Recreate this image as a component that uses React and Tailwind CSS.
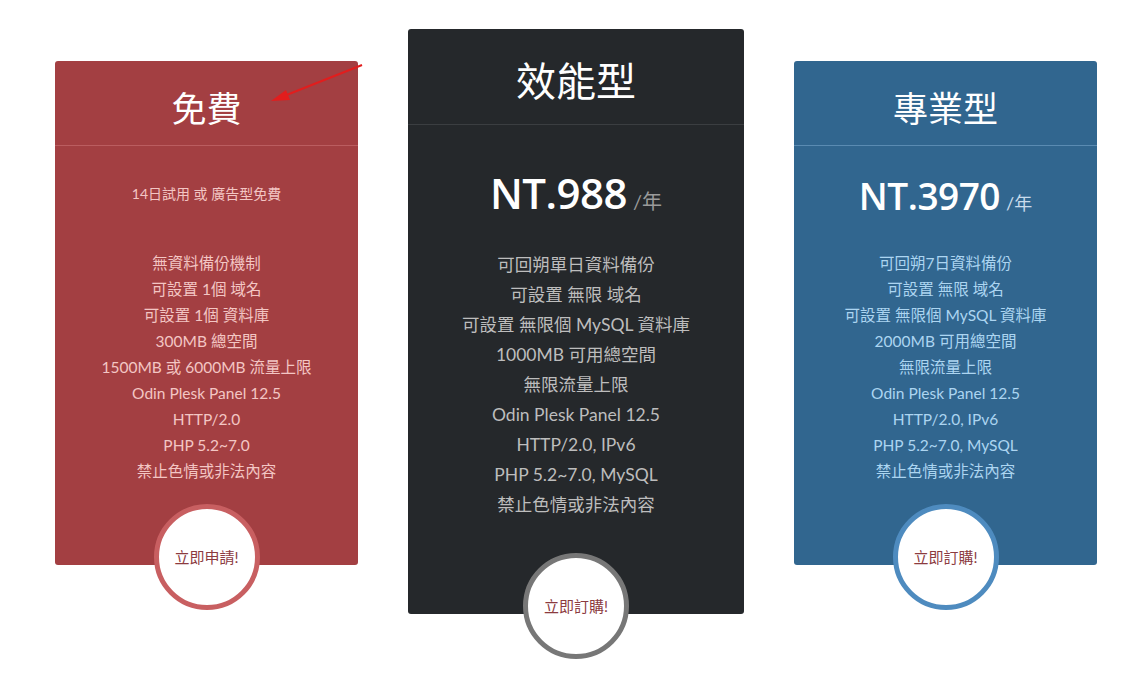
import React from 'react';

const plans = [
    {
        id: 'free',
        title: '免費',
        bg: 'bg-[#a33f42]',
        line: 'border-[#bb5d60]',
        text: 'text-[#f3c6c4]',
        ring: 'border-[#c85f61]',
        cta: '立即申請!',
        features: ['無資料備份機制', '可設置 1個 域名', '可設置 1個 資料庫', '300MB 總空間', '1500MB 或 6000MB 流量上限', 'Odin Plesk Panel 12.5', 'HTTP/2.0', 'PHP 5.2~7.0', '禁止色情或非法內容'],
    },
    {
        id: 'pro',
        title: '效能型',
        bg: 'bg-[#25282b]',
        line: 'border-[#3b3e41]',
        text: 'text-[#bdbdbd]',
        ring: 'border-[#777777]',
        cta: '立即訂購!',
        price: 'NT.988',
        features: ['可回朔單日資料備份', '可設置 無限 域名', '可設置 無限個 MySQL 資料庫', '1000MB 可用總空間', '無限流量上限', 'Odin Plesk Panel 12.5', 'HTTP/2.0, IPv6', 'PHP 5.2~7.0, MySQL', '禁止色情或非法內容'],
    },
    {
        id: 'biz',
        title: '專業型',
        bg: 'bg-[#31668f]',
        line: 'border-[#5a8bb2]',
        text: 'text-[#acd5f1]',
        ring: 'border-[#4e8bbf]',
        cta: '立即訂購!',
        price: 'NT.3970',
        features: ['可回朔7日資料備份', '可設置 無限 域名', '可設置 無限個 MySQL 資料庫', '2000MB 可用總空間', '無限流量上限', 'Odin Plesk Panel 12.5', 'HTTP/2.0, IPv6', 'PHP 5.2~7.0, MySQL', '禁止色情或非法內容'],
    },
];

function Circle({ plan, className }) {
    return (
        <div className={`w-[106px] h-[106px] rounded-full bg-white border-[5px] ${plan.ring} flex items-center justify-center shrink-0 ${className}`}>
            <span className="text-[15px] text-[#8c3b3f]">{plan.cta}</span>
        </div>
    );
}

function SideCard({ plan }) {
    return (
        <div className={`w-[303px] h-[504px] mt-[61px] rounded-[3px] ${plan.bg} flex flex-col items-center`}>
            <div className={`w-full h-[85px] shrink-0 border-b ${plan.line} flex items-center justify-center pt-[10px] text-white text-[35px]`}>
                {plan.title}
            </div>
            {plan.price ? (
                <div className="h-[104px] shrink-0 flex items-baseline justify-center pb-[16px] pt-[22px] text-white">
                    <span className="text-[37px] font-semibold tracking-[-0.5px]" style={{ fontFamily: '"Open Sans", sans-serif' }}>{plan.price}</span>
                    <span className="ml-[6px] text-[18px] text-[#c9dcec]">/年</span>
                </div>
            ) : (
                <div className={`h-[104px] shrink-0 flex items-center justify-center pb-[10px] text-[14px] ${plan.text}`}>
                    14日試用 或 廣告型免費
                </div>
            )}
            <ul className={`shrink-0 text-[15.5px] leading-[26px] text-center ${plan.text}`}>
                {plan.features.map((f) => (
                    <li key={f}>{f}</li>
                ))}
            </ul>
            <Circle plan={plan} className="mt-[20px]" />
        </div>
    );
}

function MainCard({ plan }) {
    return (
        <div className={`w-[336px] h-[585px] mt-[29px] rounded-[3px] ${plan.bg} flex flex-col items-center`}>
            <div className={`w-full h-[96px] shrink-0 border-b ${plan.line} flex items-center justify-center pt-[8px] text-white text-[40px]`}>
                {plan.title}
            </div>
            <div className="h-[125px] shrink-0 flex items-baseline justify-center pt-[36px] text-white">
                <span className="text-[42px] font-semibold tracking-[-0.5px]" style={{ fontFamily: '"Open Sans", sans-serif' }}>{plan.price}</span>
                <span className="ml-[6px] text-[20px] text-[#9a9a9a]">/年</span>
            </div>
            <ul className={`shrink-0 text-[17.5px] leading-[30px] text-center ${plan.text}`}>
                {plan.features.map((f) => (
                    <li key={f}>{f}</li>
                ))}
            </ul>
            <Circle plan={plan} className="mt-[33px]" />
        </div>
    );
}

export default function App() {
    return (
        <div className="relative w-[1144px] h-[674px] bg-white overflow-hidden" style={{ fontFamily: 'Lato, "Noto Sans CJK TC", sans-serif' }}>
            <div className="flex items-start gap-[50px] pl-[55px]">
                <SideCard plan={plans[0]} />
                <MainCard plan={plans[1]} />
                <SideCard plan={plans[2]} />
            </div>
            {/* red annotation arrow */}
            <svg className="absolute left-0 top-0 pointer-events-none" width="1144" height="674">
                <line x1="362" y1="65" x2="284" y2="96" stroke="#e21d1d" strokeWidth="2" />
                <polygon points="271,101 286,90 290,100" fill="#e21d1d" />
            </svg>
        </div>
    );
}
